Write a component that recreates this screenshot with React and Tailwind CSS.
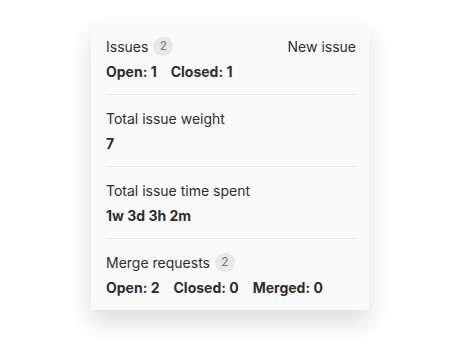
const sections = [
  {
    title: 'Issues',
    count: 2,
    action: 'New issue',
    values: ['Open: 1', 'Closed: 1'],
  },
  { title: 'Total issue weight', values: ['7'] },
  { title: 'Total issue time spent', values: ['1w 3d 3h 2m'] },
  {
    title: 'Merge requests',
    count: 2,
    values: ['Open: 2', 'Closed: 0', 'Merged: 0'],
  },
];

export default function App() {
  return (
    <div
      className="w-[459px] h-[347px] bg-white pt-[23px] pl-[91px]"
      style={{ fontFamily: 'Inter, "Liberation Sans", sans-serif' }}
    >
      <div className="w-[278px] bg-[#fafafa] pl-[15px] pr-[13px] shadow-[0_12px_22px_rgba(0,0,0,0.14)]">
        {sections.map((section, i) => (
          <div
            key={section.title}
            className={`py-3 ${i < sections.length - 1 ? 'border-b border-[#e8e8e8]' : ''}`}
          >
            <div className="h-[22px] flex items-center justify-between text-[14px] text-[#2e2e2e]">
              <div className="flex items-center">
                <span>{section.title}</span>
                {section.count != null && (
                  <span className="ml-[5px] h-[19px] min-w-[20px] px-[6px] rounded-full bg-[#e8e8e8] text-[#7a7a7a] text-[12px] flex items-center justify-center">
                    {section.count}
                  </span>
                )}
              </div>
              {section.action && <span>{section.action}</span>}
            </div>
            <div className="mt-[5px] leading-5 text-[14px] font-bold text-[#2e2e2e] flex gap-[14px]">
              {section.values.map(v => (
                <span key={v}>{v}</span>
              ))}
            </div>
          </div>
        ))}
      </div>
    </div>
  );
}
